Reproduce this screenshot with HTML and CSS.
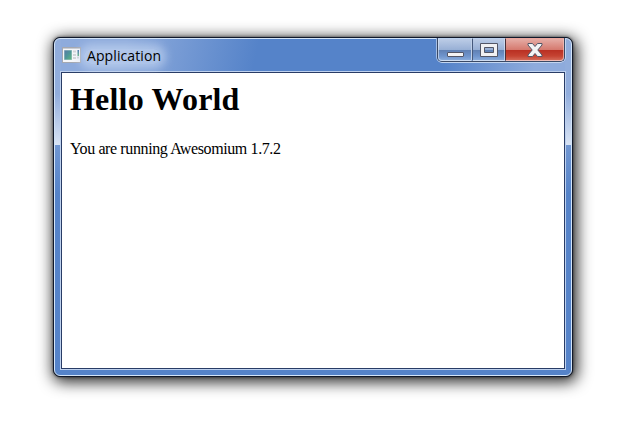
FILE: index.html
```html
<!DOCTYPE html>
<html lang="en">
<head>
<meta charset="utf-8">
<title>Application</title>
<link rel="stylesheet" href="styles.css">
</head>
<body>
<main class="window">
  <div class="frame">
    <header class="titlebar">
      <svg class="app-icon" width="19" height="16" viewBox="0 0 19 16">
        <defs>
          <linearGradient id="screen" x1="0" y1="0" x2="1" y2="1"><stop stop-color="#5779a6"/><stop offset=".5" stop-color="#4d9699"/><stop offset="1" stop-color="#61b77e"/></linearGradient>
          <linearGradient id="bar" x1="0" y1="0" x2="0" y2="1"><stop stop-color="#3f67ad"/><stop offset="1" stop-color="#55b06d"/></linearGradient>
        </defs>
        <rect x=".5" y=".5" width="18" height="15" fill="#f6f7f9" stroke="#a5a8b0"/>
        <path d="M1 1.5h17" stroke="#c9ccd3"/>
        <rect x="2" y="3" width="8" height="10" fill="#a9c8cc"/>
        <rect x="2.500" y="3.500" width="7" height="9" fill="url(#screen)"/>
        <path d="M11 4.500h3M11 8h3M11 11h3M15 10.500h2" stroke="#d3d5d8" stroke-width="2"/>
        <rect x="15.500" y="3" width="1.500" height="6" fill="url(#bar)"/>
      </svg>
      <span class="title">Application</span>
      <div class="controls">
        <div class="control minimize">
          <svg width="17" height="5" viewBox="0 0 17 5"><rect x=".5" y=".5" width="16" height="4" rx=".5" fill="#f4f4f5" stroke="#535666"/></svg>
        </div>
        <div class="control maximize">
          <svg width="18" height="14" viewBox="0 0 18 14"><path fill-rule="evenodd" d="M.5.5h17v13H.5zM4.500 4.500h9v5h-9z" fill="#f1f1f3" stroke="#535666"/></svg>
        </div>
        <div class="control close">
          <svg width="16" height="14" viewBox="0 0 16 14"><path d="M1 .5h4.500L8 3.500l2.500-3H15v1.500L10.800 7l4.200 5v1.500h-4.500L8 10.500l-2.500 3H1V12l4.200-5L1 2z" fill="#f3f3f4" stroke="#535666"/></svg>
        </div>
      </div>
    </header>
    <section class="client">
      <h1>Hello World</h1>
      <p>You are running Awesomium 1.7.2</p>
    </section>
  </div>
</main>
</body>
</html>
```
FILE: styles.css
```css
* { box-sizing: border-box; }

body {
  display: flow-root;
  height: 427px;
  margin: 0;
  background: #fff;
  overflow: hidden;
}

.window {
  width: 520px;
  height: 340px;
  margin: 37px 0 0 53px;
  border: 1px solid #10182a;
  border-radius: 7px;
  background: #10182a;
  box-shadow: 0 0 3px rgba(0, 0, 0, .6), 2px 3px 15px 2px rgba(0, 0, 0, .85);
}

.frame {
  display: flex;
  flex-direction: column;
  height: 338px;
  padding: 0 5px 5px;
  border: 1px solid #d3e4f8;
  border-radius: 6px;
  background:
    linear-gradient(#91addc 0, #91addc 55px, #d9e4f5 106px, transparent 106px) left top / 6px 106px no-repeat,
    linear-gradient(#91addc 0, #91addc 55px, #d9e4f5 106px, transparent 106px) right top / 6px 106px no-repeat,
    linear-gradient(102deg, #8eabdc 0, #8eabdc 70px, #5583c9 200px, #5583c9 360px, #5583c9 385px, #8eabdc 475px) left top / 100% 34px no-repeat,
    linear-gradient(#7197d2 106px, #5583c9 155px);
}

.titlebar {
  display: flex;
  flex: none;
  align-items: flex-start;
  height: 32px;
}

.app-icon {
  margin: 8px 0 0 2px;
}

.title {
  position: relative;
  margin: 7px 0 0 6px;
  font: 14px/20px "Open Sans", "Noto Sans", sans-serif;
  letter-spacing: .1px;
  color: #000;
  z-index: 0;
}

.title::before {
  content: "";
  position: absolute;
  inset: 3px 0 2px -3px;
  z-index: -1;
  border-radius: 9px;
  background: rgba(200, 217, 243, .6);
  box-shadow: 0 0 9px 5px rgba(200, 217, 243, .6);
}

.controls {
  display: flex;
  width: 128px;
  height: 24px;
  margin: -1px 1px 0 auto;
  border: 1px solid #3a4965;
  border-top: 0;
  border-radius: 0 0 5px 5px;
  box-shadow: 0 1px 0 #c3d5ef, 1px 0 0 #c3d5ef, -1px 0 0 #a5bee5;
}

.control {
  display: flex;
  justify-content: center;
  align-items: flex-start;
  border: 1px solid rgba(218, 230, 247, .65);
  background: linear-gradient(#bccce6 0, #97afd5 11px, #6080b3 11px, #6f94cc 17px, #9bbce5 24px);
}

.minimize {
  width: 34px;
  padding-top: 13px;
  border-right-color: #c0d0e8;
  border-bottom-left-radius: 4px;
}

.maximize {
  width: 33px;
  padding-top: 4px;
  border-left: 1px solid #46597c;
}

.close {
  flex: 1;
  padding-top: 4px;
  border-left: 1px solid #492f38;
  border-color: rgba(244, 197, 191, .7);
  border-left-color: #492f38;
  border-bottom-right-radius: 4px;
  background: linear-gradient(#e5aca5 0, #d5786d 11px, #b92f22 11px, #c54332 17px, #df8370 24px);
}

.client {
  flex: 1;
  padding: 8px;
  border: 1px solid #293c66;
  outline: 1px solid #bed1ee;
  margin: 1px;
  background: #fff;
  color: #000;
  font-family: "Liberation Serif", serif;
}

h1 {
  margin: 0;
  font-size: 32px;
  line-height: 37px;
  letter-spacing: .2px;
}

p {
  margin: 22px 0 0;
  font-size: 16px;
  line-height: 18px;
  letter-spacing: -.39px;
}
```
